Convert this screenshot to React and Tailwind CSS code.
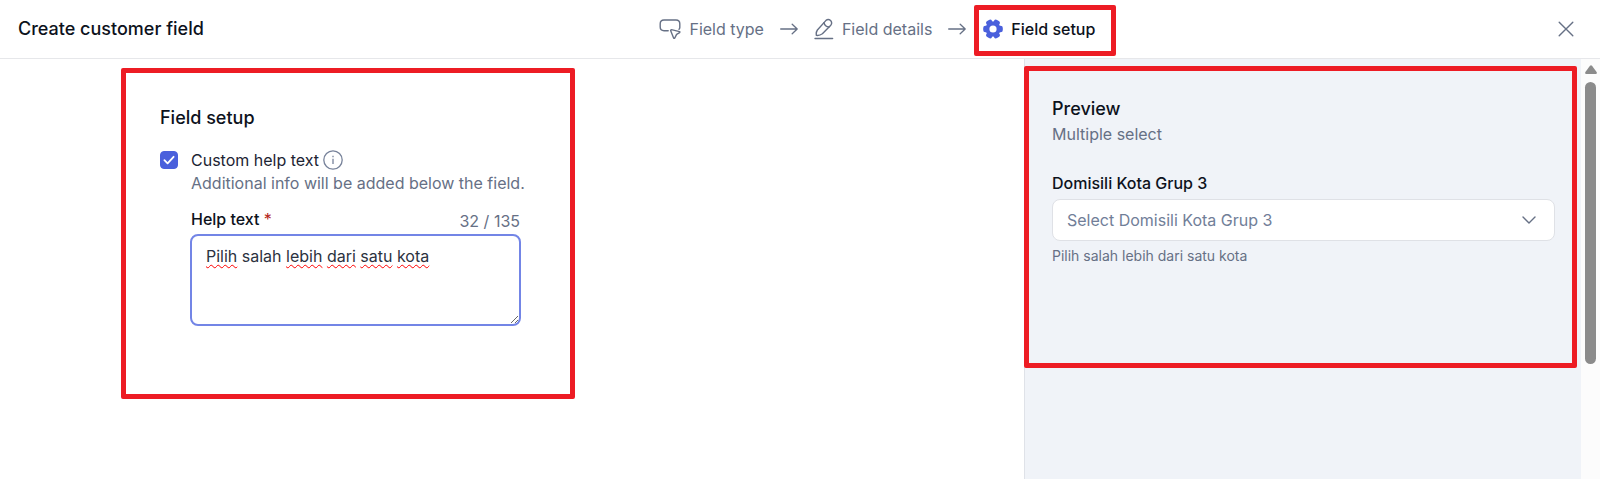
import { useState } from "react";

const MAX_LENGTH = 135;

function ButtonClickIcon() {
  return (
    <svg width="22" height="22" viewBox="0 0 22 22" fill="none" stroke="currentColor" strokeWidth="1.4" strokeLinecap="round" strokeLinejoin="round">
      <path d="M9.2 12.7H5Q1.2 12.7 1.2 9V5.8Q1.2 2 5 2H17Q20.8 2 20.8 5.8V9.4Q20.8 10.4 20 11.2" />
      <path d="M12.4 11.6L20.6 13.6Q21.2 14.1 20.6 14.6L17.6 16.4L15.8 20Q15.2 20.7 14.6 20L11.6 12.4Q11.6 11.6 12.4 11.6Z" />
    </svg>
  );
}

function PencilLineIcon() {
  return (
    <svg width="20" height="22" viewBox="0 0 20 22" fill="none" stroke="currentColor" strokeWidth="1.4" strokeLinejoin="round" strokeLinecap="round">
      <path d="M2.4 17.4Q1.8 14.4 3.4 12L11.8 2.6Q14.2 0.4 16.6 2.5Q18.6 4.8 16.8 7.2L8.4 15.8Q5.6 17.8 2.4 17.4Z" />
      <path d="M10 4.6Q10.8 8.6 15 9" />
      <path d="M1 20.5H18.6" />
    </svg>
  );
}

function ArrowIcon() {
  return (
    <svg width="18" height="12" viewBox="0 0 18 12" fill="none" stroke="currentColor" strokeWidth="1.3" strokeLinecap="round" strokeLinejoin="round">
      <path d="M0.7 6H17.2M12.2 1.2L17.2 6L12.2 10.8" />
    </svg>
  );
}

function GearIcon() {
  return (
    <svg width="20" height="20" viewBox="0 0 20 20">
      <g fill="#4a60dc">
        <circle cx="10" cy="10" r="7.6" />
        <rect x="6.8" y="0.2" width="6.4" height="19.6" rx="2.2" transform="rotate(30 10 10)" />
        <rect x="6.8" y="0.2" width="6.4" height="19.6" rx="2.2" transform="rotate(90 10 10)" />
        <rect x="6.8" y="0.2" width="6.4" height="19.6" rx="2.2" transform="rotate(150 10 10)" />
      </g>
      <circle cx="10" cy="10" r="3.6" fill="#fff" />
    </svg>
  );
}

function Step({ icon, label }) {
  return (
    <div className="flex items-center gap-2">
      {icon}
      <span>{label}</span>
    </div>
  );
}

function Header() {
  return (
    <header className="flex h-[59px] items-center justify-between border-b border-[#e6e7ea] pr-4 pl-[18px]">
      <h1 className="text-lg font-medium text-[#0d121c]">Create customer field</h1>

      <div className="ml-6 flex items-center gap-4 text-base text-[#667085]">
        <Step icon={<ButtonClickIcon />} label="Field type" />
        <ArrowIcon />
        <Step icon={<PencilLineIcon />} label="Field details" />
        <ArrowIcon />
        <div className="mt-0.5 -ml-2 flex h-[51px] items-center gap-2 rounded-xs border-[5px] border-[#ed1c24] pr-4 pb-0.5 pl-1 font-medium text-[#0d121c]">
          <GearIcon />
          <span>Field setup</span>
        </div>
      </div>

      <button type="button" aria-label="Close" className="p-2.5 text-[#667085]">
        <svg width="16" height="16" viewBox="0 0 16 16" fill="none" stroke="currentColor" strokeWidth="1.4" strokeLinecap="round">
          <path d="M1.2 1.2L14.8 14.8M14.8 1.2L1.2 14.8" />
        </svg>
      </button>
    </header>
  );
}

// Draws the wavy underline behind the words the dictionary doesn't know
function SpellMarks({ text }) {
  const known = ["salah"];
  return (
    <div aria-hidden="true" className="absolute inset-0 px-4 py-2.5 text-base text-transparent select-none">
      {text.split(" ").map((word, i) => (
        <span key={i}>
          {i > 0 && " "}
          <span className={known.includes(word) ? "" : "underline decoration-[#ff0000] decoration-wavy decoration-1 underline-offset-2"}>
            {word}
          </span>
        </span>
      ))}
    </div>
  );
}

function FieldSetup({ helpText, setHelpText }) {
  const [custom, setCustom] = useState(true);

  return (
    <section className="mt-[9px] ml-[121px] w-[454px] rounded-xs border-[5px] border-[#ed1c24] pt-[31px] pr-[50px] pb-[68px] pl-[34px]">
      <h2 className="text-lg font-medium text-[#0d121c]">Field setup</h2>

      <div className="mt-4 flex gap-[13px]">
        <div className="relative mt-[3px] h-[18px]">
          <input
            id="custom-help"
            type="checkbox"
            checked={custom}
            onChange={(e) => setCustom(e.target.checked)}
            className="peer block size-[18px] appearance-none rounded border border-[#667085] checked:border-[#4a60dc] checked:bg-[#4a60dc]"
          />
          <svg viewBox="0 0 18 18" className="pointer-events-none absolute inset-0 hidden size-[18px] peer-checked:block" fill="none" stroke="#fff" strokeWidth="1.8" strokeLinecap="round" strokeLinejoin="round">
            <path d="M4.4 9.2L7.6 12.4L13.6 5.8" />
          </svg>
        </div>

        <div className="min-w-0 flex-1">
          <div className="flex h-6 items-center gap-1">
            <label htmlFor="custom-help" className="text-base text-[#1d2433]">Custom help text</label>
            <svg width="20" height="20" viewBox="0 0 20 20" fill="none" stroke="#77829a" strokeWidth="1.3">
              <circle cx="10" cy="10" r="9.2" />
              <path d="M10 8.8V14M10 5.8V7.2" />
            </svg>
          </div>
          <p className="-mt-px text-base whitespace-nowrap text-[#667085]">Additional info will be added below the field.</p>

          <div className="mt-2.5 flex items-center justify-between">
            <label htmlFor="help-text" className="text-base font-medium text-[#0d121c]">
              Help text <span className="font-normal text-[#b42318]">*</span>
            </label>
            <span className="mt-1 text-base text-[#667085]">
              {helpText.length} / {MAX_LENGTH}
            </span>
          </div>

          <div className="relative -mx-px mt-px h-[92px]">
            <SpellMarks text={helpText} />
            <textarea
              id="help-text"
              spellCheck={false}
              maxLength={MAX_LENGTH}
              value={helpText}
              onChange={(e) => setHelpText(e.target.value)}
              className="relative block h-full w-full resize rounded-lg border-2 border-[#7385e6] px-3.5 py-2 text-base text-[#2b3240] outline-none"
            />
          </div>
        </div>
      </div>
    </section>
  );
}

function Preview({ helpText }) {
  return (
    <aside className="flex w-[36%] border-l border-[#dfe2e8] bg-[#f0f3f8]">
      <div className="flex-1 pt-[7px] pr-1">
        <section className="-ml-px h-[302px] rounded-xs border-[5px] border-[#ed1c24] pt-6 pr-[17px] pl-[23px]">
          <h2 className="text-lg font-medium text-[#0d121c]">Preview</h2>
          <p className="-mt-px text-base text-[#667085]">Multiple select</p>

          <label htmlFor="preview-select" className="mt-[25px] block text-base font-medium text-[#0d121c]">
            Domisili Kota Grup 3
          </label>
          <div className="relative mt-1">
            <select
              id="preview-select"
              className="block h-[42px] w-full appearance-none rounded-lg border border-[#dfe1e6] bg-white px-3.5 text-base text-[#717e98]"
            >
              <option>Select Domisili Kota Grup 3</option>
            </select>
            <svg width="14" height="8" viewBox="0 0 14 8" className="pointer-events-none absolute top-[17px] right-[19px]" fill="none" stroke="#667085" strokeWidth="1.4" strokeLinecap="round" strokeLinejoin="round">
              <path d="M1 1L7 7L13 1" />
            </svg>
          </div>
          <p className="mt-[5px] text-sm text-[#667085]">{helpText}</p>
        </section>
      </div>

      {/* Scrollbar */}
      <div className="flex w-[19px] flex-col items-center bg-[#fcfcfc] pt-1.5">
        <svg width="12" height="9" viewBox="0 0 12 9" fill="#8b8b8b">
          <path d="M5 0.8Q6 -0.4 7 0.8L11.6 7Q12.4 9 10.8 9H1.2Q-0.4 9 0.4 7Z" />
        </svg>
        <div className="mt-2 h-[282px] w-[11px] rounded-full bg-[#8b8b8b]" />
      </div>
    </aside>
  );
}

export default function App() {
  const [helpText, setHelpText] = useState("Pilih salah lebih dari satu kota");

  return (
    <div className="flex min-h-screen flex-col bg-white font-['Inter',sans-serif]">
      <Header />
      <div className="flex flex-1">
        <main className="flex-1">
          <FieldSetup helpText={helpText} setHelpText={setHelpText} />
        </main>
        <Preview helpText={helpText} />
      </div>
    </div>
  );
}
